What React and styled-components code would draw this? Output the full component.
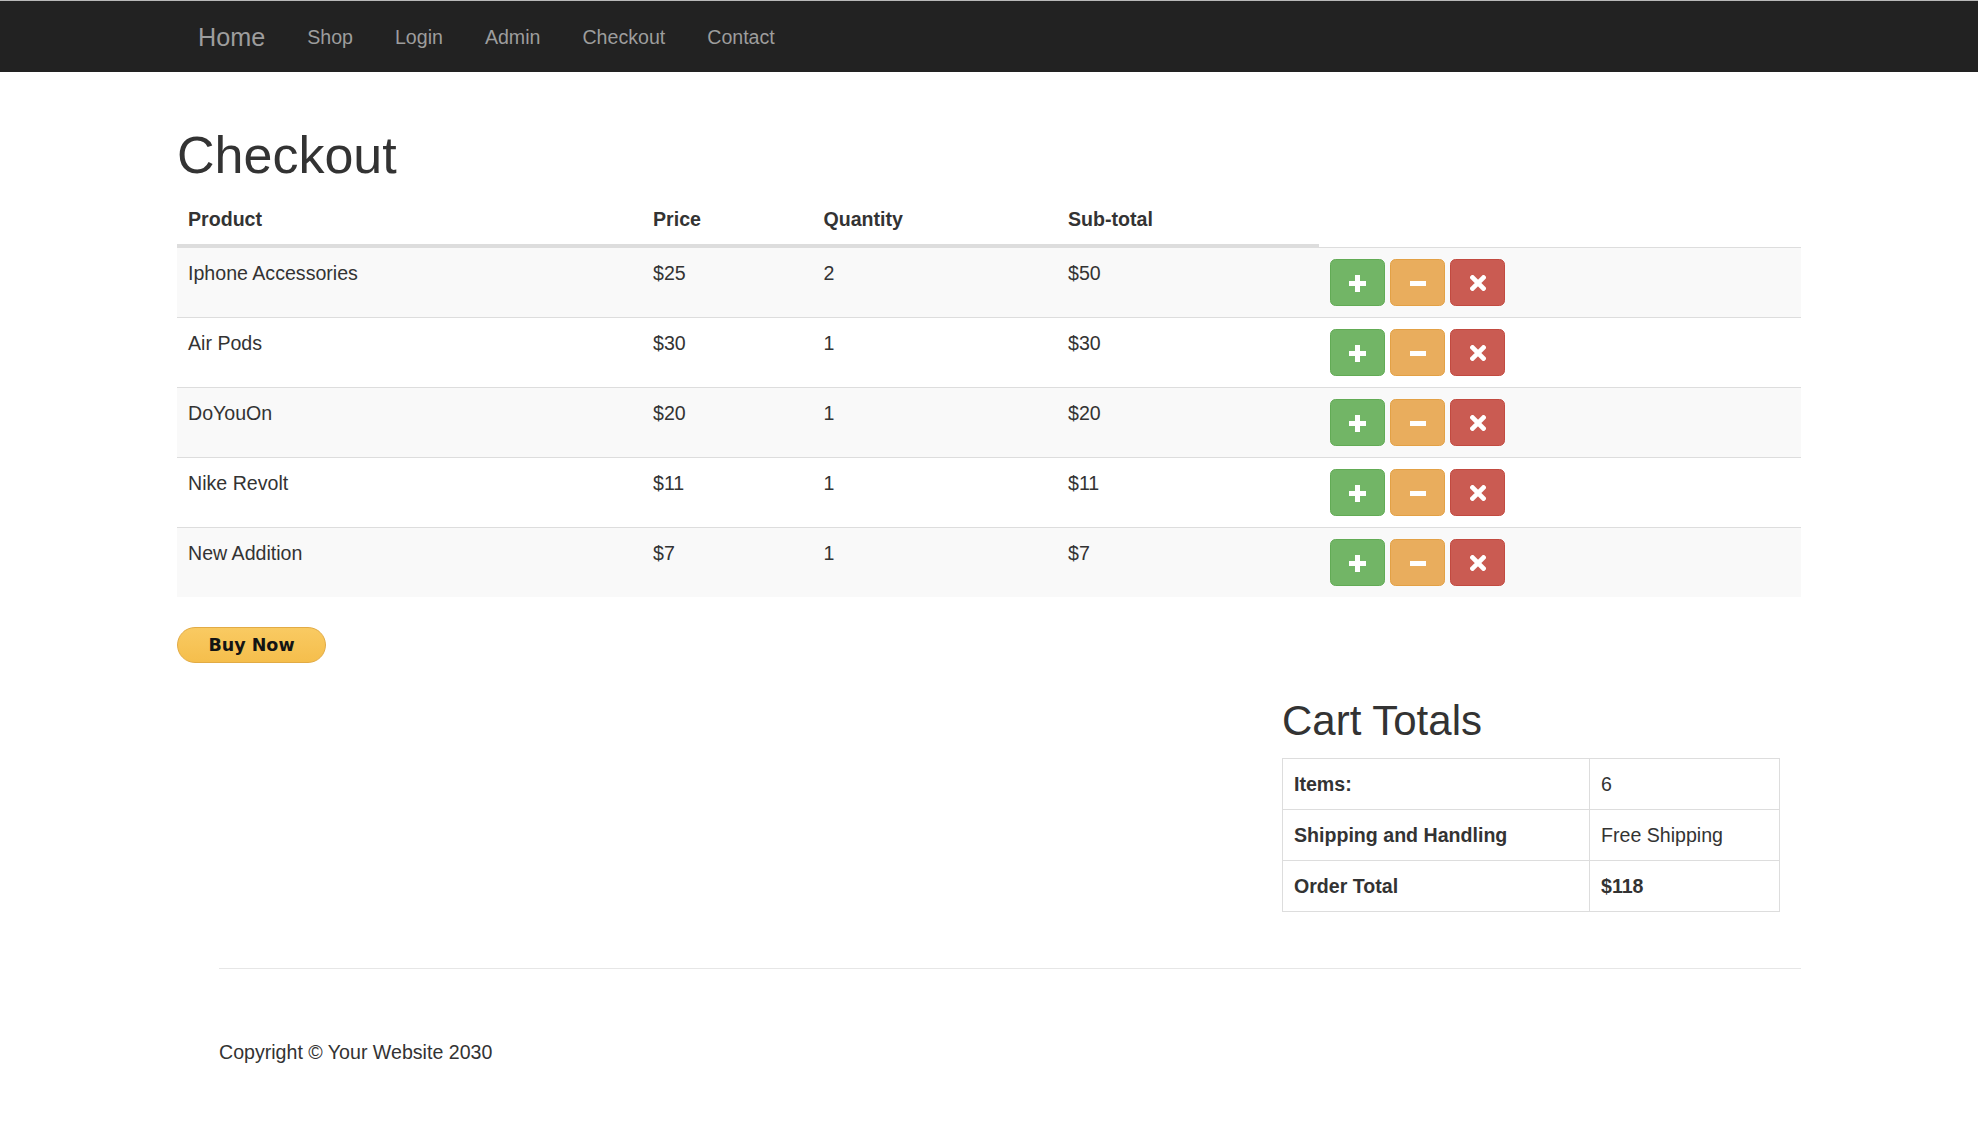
import React from "react";
import styled, { createGlobalStyle, css } from "styled-components";

const GlobalStyle = createGlobalStyle`
  html, body { margin: 0; padding: 0; background: #fff; }
  body {
    font-family: "Liberation Sans", Arial, Helvetica, sans-serif;
    font-size: 19.6px;
    line-height: 28px;
    color: #333;
  }
  * { box-sizing: border-box; }
`;

const Page = styled.div`
  min-height: 1141px;
  padding-bottom: 60px;
`;

const NavBar = styled.nav`
  background: #222;
  border-top: 1px solid #b9b9b9;
  height: 72px;
`;

const NavInner = styled.div`
  width: 1624px;
  margin: 0 auto;
  height: 100%;
  display: flex;
  align-items: center;
`;

const Brand = styled.a`
  padding: 0 21px;
  font-size: 25.2px;
  line-height: 28px;
  color: #9d9d9d;
  text-decoration: none;
`;

const NavLink = styled.a`
  padding: 0 21px;
  font-size: 19.6px;
  line-height: 28px;
  color: #9d9d9d;
  text-decoration: none;
`;

const Container = styled.main`
  width: 1624px;
  margin: 0 auto;
`;

const Title = styled.h1`
  margin: 55px 0 10px;
  font-size: 52px;
  line-height: 57px;
  font-weight: 500;
  color: #333;
`;

const gridCols = css`
  display: grid;
  grid-template-columns: 465px 170.5px 244.5px 262px 1fr;
`;

const HeadRow = styled.div`
  ${gridCols}
`;

const HeadCell = styled.div`
  padding: 11px;
  font-weight: 700;
  border-bottom: ${(p) => (p.$empty ? "0" : "3px solid #ddd")};
`;

const BodyRow = styled.div`
  ${gridCols}
  align-items: start;
  border-top: 1px solid #ddd;
  background: ${(p) => (p.$striped ? "#f9f9f9" : "#fff")};
`;

const Cell = styled.div`
  padding: 11px;
  min-height: 69px;
`;

const ActionCell = styled(Cell)`
  display: flex;
  gap: 5px;
`;

const variants = {
  add: { bg: "#72b566", border: "#62ab55" },
  sub: { bg: "#e9ad5d", border: "#e3a145" },
  del: { bg: "#ca5b52", border: "#c24a40" },
};

const ActionButton = styled.button`
  width: 55px;
  height: 47px;
  padding: 0;
  border-radius: 5.6px;
  border: 1.4px solid ${(p) => variants[p.$variant].border};
  background: ${(p) => variants[p.$variant].bg};
  display: flex;
  align-items: center;
  justify-content: center;
  cursor: pointer;
  svg { display: block; margin-top: 1px; }
`;

const BuyNow = styled.button`
  margin-top: 30px;
  width: 149px;
  height: 36px;
  border-radius: 18px;
  border: 1px solid #e2ab45;
  background: linear-gradient(#f9ca62, #f5be4c);
  font-family: "DejaVu Sans", Verdana, sans-serif;
  font-weight: 700;
  font-size: 17.5px;
  color: #141414;
  padding: 0;
  cursor: pointer;
`;

const CartRow = styled.section`
  display: flex;
  justify-content: flex-end;
`;

const CartColumn = styled.div`
  width: 540px;
  padding: 0 21px;
`;

const CartTitle = styled.h2`
  margin: 35px 0 14px;
  font-size: 42px;
  line-height: 46px;
  font-weight: 500;
  color: #333;
`;

const TotalsTable = styled.div`
  display: grid;
  grid-template-columns: 307px 1fr;
  border-top: 1px solid #ddd;
  border-left: 1px solid #ddd;
`;

const TotalsCell = styled.div`
  padding: 11px;
  border-right: 1px solid #ddd;
  border-bottom: 1px solid #ddd;
  font-weight: ${(p) => (p.$bold ? 700 : 400)};
`;

const Footer = styled.footer`
  margin-left: 42px;
`;

const Rule = styled.hr`
  margin: 56px 0 0;
  border: 0;
  border-top: 1px solid #e6e6e6;
`;

const Copyright = styled.p`
  margin: 69px 0 0;
`;

const PlusIcon = () => (
  <svg width="17" height="17" viewBox="0 0 17 17">
    <path d="M6 0h5v6h6v5h-6v6H6v-6H0V6h6z" fill="#fff" />
  </svg>
);

const MinusIcon = () => (
  <svg width="16" height="17" viewBox="0 0 16 17">
    <rect x="0" y="6" width="16" height="5" fill="#fff" />
  </svg>
);

const RemoveIcon = () => (
  <svg width="16" height="16" viewBox="0 0 16 16">
    <path d="M2.5 2.5L13.5 13.5M13.5 2.5L2.5 13.5" stroke="#fff" strokeWidth="4.6" strokeLinecap="square" />
  </svg>
);

const items = [
  { name: "Iphone Accessories", price: 25, qty: 2 },
  { name: "Air Pods", price: 30, qty: 1 },
  { name: "DoYouOn", price: 20, qty: 1 },
  { name: "Nike Revolt", price: 11, qty: 1 },
  { name: "New Addition", price: 7, qty: 1 },
];

export default function App() {
  const count = items.reduce((s, i) => s + i.qty, 0);
  const total = items.reduce((s, i) => s + i.qty * i.price, 0);
  return (
    <Page>
      <GlobalStyle />
      <NavBar>
        <NavInner>
          <Brand href="#">Home</Brand>
          <NavLink href="#">Shop</NavLink>
          <NavLink href="#">Login</NavLink>
          <NavLink href="#">Admin</NavLink>
          <NavLink href="#">Checkout</NavLink>
          <NavLink href="#">Contact</NavLink>
        </NavInner>
      </NavBar>
      <Container>
        <Title>Checkout</Title>
        <HeadRow>
          <HeadCell>Product</HeadCell>
          <HeadCell>Price</HeadCell>
          <HeadCell>Quantity</HeadCell>
          <HeadCell>Sub-total</HeadCell>
          <HeadCell $empty />
        </HeadRow>
        {items.map((it, i) => (
          <BodyRow key={it.name} $striped={i % 2 === 0}>
            <Cell>{it.name}</Cell>
            <Cell>${it.price}</Cell>
            <Cell>{it.qty}</Cell>
            <Cell>${it.price * it.qty}</Cell>
            <ActionCell>
              <ActionButton $variant="add" aria-label="add"><PlusIcon /></ActionButton>
              <ActionButton $variant="sub" aria-label="remove one"><MinusIcon /></ActionButton>
              <ActionButton $variant="del" aria-label="delete"><RemoveIcon /></ActionButton>
            </ActionCell>
          </BodyRow>
        ))}
        <BuyNow>Buy Now</BuyNow>
        <CartRow>
          <CartColumn>
            <CartTitle>Cart Totals</CartTitle>
            <TotalsTable>
              <TotalsCell $bold>Items:</TotalsCell>
              <TotalsCell>{count}</TotalsCell>
              <TotalsCell $bold>Shipping and Handling</TotalsCell>
              <TotalsCell>Free Shipping</TotalsCell>
              <TotalsCell $bold>Order Total</TotalsCell>
              <TotalsCell $bold>${total}</TotalsCell>
            </TotalsTable>
          </CartColumn>
        </CartRow>
        <Footer>
          <Rule />
          <Copyright>Copyright © Your Website 2030</Copyright>
        </Footer>
      </Container>
    </Page>
  );
}
